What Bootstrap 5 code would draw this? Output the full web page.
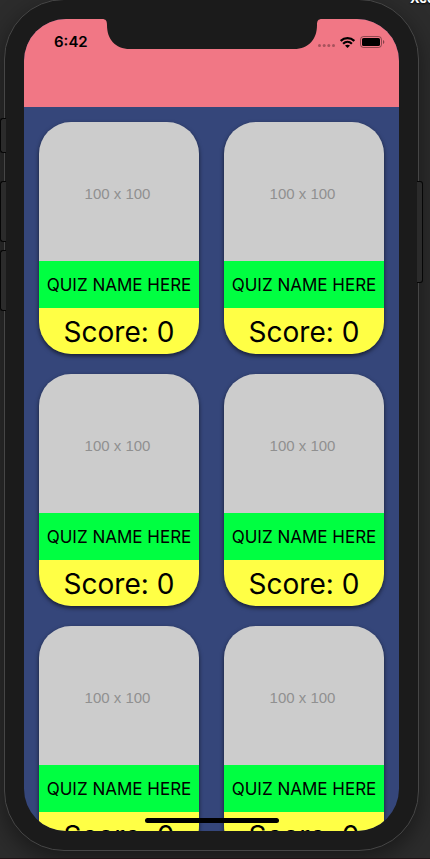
<!DOCTYPE html>
<html lang="en">
<head>
<meta charset="utf-8">
<meta name="viewport" content="width=device-width, initial-scale=1">
<title>Quizzes</title>
<link href="https://cdn.jsdelivr.net/npm/bootstrap@5.3.0/dist/css/bootstrap.min.css" rel="stylesheet">
<style>
body { background: #2c2c2c; color: #000; font-family: Inter, "Liberation Sans", sans-serif; border-bottom: 1px solid #1f1416; }
.desk-label { top: -10px; left: calc(100% - 20px); font-size: 13px; line-height: 16px; font-weight: 700; color: #fff; text-shadow: 0 1px 2px #000; white-space: nowrap; }
.phone { min-height: 0; margin: -1px 11px 7px 4px; padding: 19px; background: #1b1b1b; border: 1px solid #464646; border-radius: 60px; box-shadow: 0 8px 24px rgba(0,0,0,.45); }
.phone-screen { min-height: 0; background: #35467a; border-radius: 42px; }
.side-key { background: #2b2b2b; border: 1px solid #060606; }
.key-left { left: -5px; width: 6px; border-right: 0; border-radius: 3px 0 0 3px; }
.key-right { right: -5px; width: 6px; border-left: 0; border-radius: 0 3px 3px 0; }
.key-mute { top: 118px; height: 35px; }
.key-up { top: 181px; height: 61px; }
.key-down { top: 250px; height: 61px; }
.key-power { top: 181px; height: 102px; }
.top-bar { height: 88px; background: #f17785; padding: 13px 14px 0 30px; }
.notch { top: 0; left: 50%; transform: translateX(-50%); }
.clock { font-size: 15px; line-height: 20px; font-weight: 600; }
.status-icons { height: 20px; gap: 5px; }
.quiz-list { padding: 15px; column-gap: 25px; row-gap: 20px; display: grid; grid-template-columns: 1fr 1fr; }
.quiz-card { border-radius: 32px; box-shadow: 0 2px 4px rgba(0,0,0,.6); }
.quiz-thumb { height: 139px; background: #ccc; color: #909090; font: 15px/20px "Liberation Sans", sans-serif; padding: 4px 3px 0 0; }
.quiz-name { height: 47px; background: #00ff41; font-size: 17px; line-height: 24px; }
.quiz-score { height: 46px; background: #ffff45; font-size: 28px; line-height: 36px; padding-top: 2px; }
.home-bar { width: 134px; height: 5px; bottom: 8px; left: 50%; margin-left: -67px; background: #000; border-radius: 3px; }
</style>
</head>
<body class="vh-100 d-flex flex-column overflow-hidden position-relative">
<main class="phone flex-fill d-flex position-relative">
  <span class="side-key key-left key-mute position-absolute"></span>
  <span class="side-key key-left key-up position-absolute"></span>
  <span class="side-key key-left key-down position-absolute"></span>
  <span class="side-key key-right key-power position-absolute"></span>
  <div class="phone-screen flex-fill d-flex flex-column overflow-hidden position-relative">
    <header class="top-bar flex-shrink-0 d-flex justify-content-between align-items-start">
      <span class="clock">6:42</span>
      <svg class="notch position-absolute" width="220" height="30" viewBox="0 0 220 30" aria-hidden="true"><path fill="#1b1b1b" d="M0 0C4 0 5 2 5 6C5 20 13 30 28 30H192C207 30 215 20 215 6C215 2 216 0 220 0Z"/></svg>
      <div class="status-icons d-flex align-items-center">
        <svg width="17" height="12" viewBox="0 0 17 12" aria-label="No signal"><g fill="#000" opacity=".3"><circle cx="1.5" cy="9.5" r="1.5"/><circle cx="6.2" cy="9.5" r="1.5"/><circle cx="10.8" cy="9.5" r="1.5"/><circle cx="15.5" cy="9.5" r="1.5"/></g></svg>
        <svg width="15" height="11" viewBox="0 0 15 11" aria-label="Wi-Fi"><path fill="none" stroke="#000" stroke-width="2.2" d="M.7 3.9C4.6 .2 10.4 .2 14.3 3.9M3.1 6.7C5.7 4.2 9.3 4.2 11.9 6.7"/><path d="M7.5 11L5 8.6C6.5 7.3 8.5 7.3 10 8.6Z"/></svg>
        <svg width="25" height="12" viewBox="0 0 25 12" aria-label="Battery full"><rect x=".5" y=".5" width="21" height="11" rx="3" fill="none" stroke="#000" stroke-opacity=".4"/><rect x="2" y="2" width="18" height="8" rx="1.6"/><path fill-opacity=".45" d="M23 4C24.8 4.7 24.8 7.3 23 8Z"/></svg>
      </div>
    </header>
    <section class="quiz-list" aria-label="Quizzes">
      <article class="quiz-card overflow-hidden"><div class="quiz-thumb d-flex align-items-center justify-content-center"><span>100 x 100</span></div><div class="quiz-name d-flex align-items-center justify-content-center text-nowrap">QUIZ NAME HERE</div><div class="quiz-score d-flex align-items-center justify-content-center text-nowrap">Score: 0</div></article>
      <article class="quiz-card overflow-hidden"><div class="quiz-thumb d-flex align-items-center justify-content-center"><span>100 x 100</span></div><div class="quiz-name d-flex align-items-center justify-content-center text-nowrap">QUIZ NAME HERE</div><div class="quiz-score d-flex align-items-center justify-content-center text-nowrap">Score: 0</div></article>
      <article class="quiz-card overflow-hidden"><div class="quiz-thumb d-flex align-items-center justify-content-center"><span>100 x 100</span></div><div class="quiz-name d-flex align-items-center justify-content-center text-nowrap">QUIZ NAME HERE</div><div class="quiz-score d-flex align-items-center justify-content-center text-nowrap">Score: 0</div></article>
      <article class="quiz-card overflow-hidden"><div class="quiz-thumb d-flex align-items-center justify-content-center"><span>100 x 100</span></div><div class="quiz-name d-flex align-items-center justify-content-center text-nowrap">QUIZ NAME HERE</div><div class="quiz-score d-flex align-items-center justify-content-center text-nowrap">Score: 0</div></article>
      <article class="quiz-card overflow-hidden"><div class="quiz-thumb d-flex align-items-center justify-content-center"><span>100 x 100</span></div><div class="quiz-name d-flex align-items-center justify-content-center text-nowrap">QUIZ NAME HERE</div><div class="quiz-score d-flex align-items-center justify-content-center text-nowrap">Score: 0</div></article>
      <article class="quiz-card overflow-hidden"><div class="quiz-thumb d-flex align-items-center justify-content-center"><span>100 x 100</span></div><div class="quiz-name d-flex align-items-center justify-content-center text-nowrap">QUIZ NAME HERE</div><div class="quiz-score d-flex align-items-center justify-content-center text-nowrap">Score: 0</div></article>
    </section>
    <div class="home-bar position-absolute"></div>
  </div>
</main>
<span class="desk-label position-absolute">Xcode</span>
<script src="https://cdn.jsdelivr.net/npm/bootstrap@5.3.0/dist/js/bootstrap.bundle.min.js"></script>
</body>
</html>
